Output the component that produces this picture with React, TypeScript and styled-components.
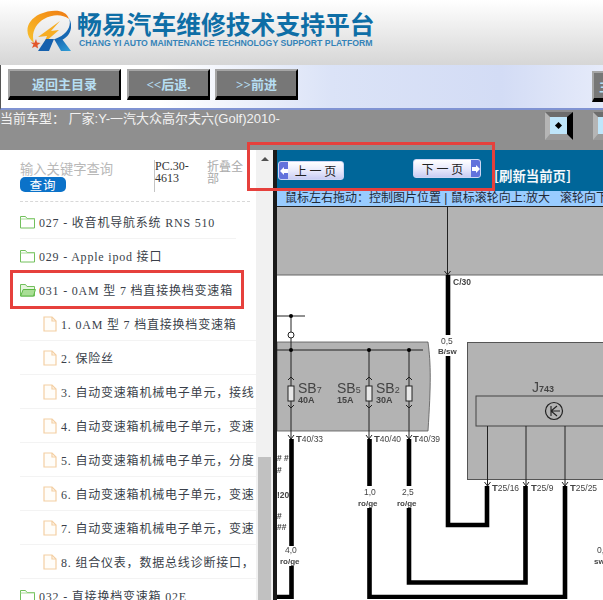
import React from "react";
import styled, { createGlobalStyle } from "styled-components";

const GlobalStyle = createGlobalStyle`
	html, body {
		margin: 0;
		padding: 0;
		background: #fff;
	}
`;

const SERIF = `"Liberation Serif", "Noto Sans CJK SC", serif`;
const SANS = `"Liberation Sans", "Noto Sans CJK SC", sans-serif`;

const Page = styled.div`
	position: relative;
	width: 603px;
	height: 600px;
	overflow: hidden;
	font-family: ${SANS};
`;

const Header = styled.header`
	height: 65px;
	box-sizing: border-box;
	display: flex;
	align-items: flex-start;
	gap: 6px;
	padding: 10px 0 0 25px;
	background: linear-gradient(#ffffff, #d6d6d6);
`;

const Brand = styled.div`
	display: flex;
	flex-direction: column;
	gap: 1px;
`;

const BrandTitle = styled.div`
	font-family: "Noto Sans CJK SC", sans-serif;
	font-size: 24.8px;
	line-height: 27px;
	font-weight: 700;
	white-space: nowrap;
	color: #0e6ea6;
`;

const BrandSub = styled.div`
	font-size: 8.7px;
	line-height: 11px;
	font-weight: 700;
	white-space: nowrap;
	padding-left: 2px;
	color: #3583b8;
`;

const NavBar = styled.nav`
	height: 45px;
	box-sizing: border-box;
	display: flex;
	gap: 5px;
	padding: 4px 0 0 7px;
	border-left: 1px solid #555;
	border-bottom: 2px solid #8093d2;
	background: linear-gradient(90deg, #ffffff 0, #ffffff 160px, #dbe3f7 330px, #d3dcf5 500px, #e6ebfa 603px);
`;

const NavButton = styled.button<{ $w: number; $ml?: number; $mt?: number }>`
	width: ${(p) => p.$w}px;
	margin: ${(p) => p.$mt || 0}px 0 0 ${(p) => p.$ml || 0}px;
	height: 31px;
	flex: none;
	box-sizing: border-box;
	padding: 0;
	background: #777777;
	border-style: solid;
	border-width: 2px 2px 4px 2px;
	border-color: #a5a5a5 #000 #000 #a5a5a5;
	color: #b6def2;
	font-family: ${SERIF};
	font-size: 13px;
	font-weight: 700;
	white-space: nowrap;
	overflow: hidden;
`;

const ModelBar = styled.div`
	height: 40px;
	display: flex;
	align-items: flex-start;
	background: #8f8f8f;
`;

const ModelText = styled.div`
	width: 545px;
	flex: none;
	font-size: 13px;
	line-height: 17px;
	color: #f2f2f2;
	white-space: nowrap;
`;

const ToolButton = styled.div<{ $ml?: number }>`
	width: 28px;
	height: 28px;
	flex: none;
	margin: 2px 0 0 ${(p) => p.$ml || 0}px;
	box-sizing: border-box;
	display: flex;
	align-items: center;
	justify-content: center;
	background: #bfe6fb;
	border-style: solid;
	border-width: 5px 6px 6px 5px;
	border-color: #6d6d6d #000 #9a9a9a #b5b5b5;
`;

const Diamond = styled.span`
	width: 5px;
	height: 5px;
	background: #000;
	transform: rotate(45deg);
`;

const Main = styled.main`
	display: flex;
	height: 450px;
`;

const Sidebar = styled.aside`
	width: 256px;
	flex: none;
	overflow: hidden;
	background: #fff;
`;

const SearchRow = styled.div`
	height: 52px;
	box-sizing: border-box;
	display: flex;
	margin: 0 6px 0 20px;
	padding-top: 10px;
	border-bottom: 1px dashed #d8d8d8;
`;

const SearchBox = styled.div`
	width: 134px;
	flex: none;
`;

const Placeholder = styled.div`
	font-family: "Noto Sans CJK SC", sans-serif;
	font-size: 13.3px;
	line-height: 17px;
	white-space: nowrap;
	color: #b8b8b8;
`;

const SearchButton = styled.div`
	width: 46px;
	height: 15px;
	border-radius: 5px;
	background: #0b72c9;
	color: #fff;
	font-family: "Noto Sans CJK SC", sans-serif;
	font-size: 12.5px;
	line-height: 15px;
	text-align: center;
	letter-spacing: 1px;
`;

const PartNo = styled.div`
	width: 53px;
	height: 32px;
	flex: none;
	box-sizing: border-box;
	border-left: 1px solid #c4c4c4;
	font-family: ${SERIF};
	font-size: 12px;
	line-height: 12px;
	color: #333;
`;

const Collapse = styled.div`
	width: 40px;
	flex: none;
	font-family: "Noto Sans CJK SC", sans-serif;
	font-size: 12px;
	line-height: 12px;
	color: #aaa;
`;

const Row = styled.div<{ $file?: boolean }>`
	height: 33px;
	width: 216px;
	margin-left: 20px;
	padding-left: ${(p) => (p.$file ? 23 : 0)}px;
	box-sizing: content-box;
	display: flex;
	align-items: center;
	gap: ${(p) => (p.$file ? 4 : 3)}px;
	border-bottom: 1px solid #f3f3f3;
	white-space: nowrap;
	font-family: ${SERIF};
	font-size: 12px;
	letter-spacing: 0.8px;
	color: #3a3f4a;
`;

const RowList = styled.div`
	padding-top: 3px;
`;

const Scrollbar = styled.div`
	width: 17px;
	flex: none;
	display: flex;
	flex-direction: column;
	align-items: center;
	background: #f1f1f1;
`;

const ScrollArrow = styled.div`
	margin-top: 7px;
	width: 0;
	height: 0;
	border-left: 4px solid transparent;
	border-right: 4px solid transparent;
	border-bottom: 4px solid #505050;
`;

const ScrollThumb = styled.div`
	margin-top: auto;
	width: 13px;
	height: 143px;
	background: #c1c1c1;
`;

const Viewer = styled.section`
	flex: 1;
	min-width: 0;
	display: flex;
	flex-direction: column;
	border-left: 4px solid #1a1a1a;
`;

const PageBand = styled.div`
	height: 41px;
	flex: none;
	background: #006699;
	display: flex;
	padding-left: 1px;
`;

const PageButton = styled.div<{ $mt: number; $w: number; $ml?: number }>`
	width: ${(p) => p.$w}px;
	height: 19px;
	margin: ${(p) => p.$mt}px 0 0 ${(p) => p.$ml || 0}px;
	box-sizing: border-box;
	flex: none;
	display: flex;
	align-items: center;
	border: 1px solid #cdd6f5;
	border-radius: 3px;
	background: linear-gradient(#ffffff, #e6e8fb 55%, #c9cdf3);
	color: #222;
	font-family: "Noto Sans CJK SC", sans-serif;
	font-size: 12px;
	overflow: hidden;
`;

const PageLabel = styled.span`
	flex: 1;
	text-align: center;
	white-space: nowrap;
`;

const PageArrow = styled.span`
	width: 9px;
	align-self: stretch;
	flex: none;
	display: flex;
	align-items: center;
	justify-content: center;
	background: #6272dc;
`;

const Refresh = styled.div`
	margin: 16px 0 0 13px;
	font-family: "Noto Sans CJK SC", sans-serif;
	font-size: 13.4px;
	line-height: 18px;
	font-weight: 700;
	color: #f4f8fb;
	white-space: nowrap;
`;

const HintBar = styled.div`
	height: 16px;
	flex: none;
	box-sizing: border-box;
	padding-left: 8px;
	background: #99ccff;
	border-bottom: 1px solid #222;
	color: #1f2a38;
	font-size: 12px;
	line-height: 15px;
	white-space: pre;
	overflow: hidden;
`;

const Diagram = styled.svg`
	display: block;
	flex: none;
	background: #fff;
	filter: blur(0.35px);
`;

const RedFrame = styled.div<{ $x: number; $y: number; $w: number; $h: number }>`
	position: absolute;
	left: ${(p) => p.$x}px;
	top: ${(p) => p.$y}px;
	width: ${(p) => p.$w}px;
	height: ${(p) => p.$h}px;
	box-sizing: border-box;
	border: 3px solid #e6403c;
	pointer-events: none;
`;

const Logo = () => (
	<svg width="46" height="42" viewBox="0 0 46 42">
		<defs>
			<linearGradient id="ring" x1="0" y1="1" x2="1" y2="0">
				<stop offset="0" stopColor="#f7c22f" />
				<stop offset="0.6" stopColor="#f59a1b" />
				<stop offset="1" stopColor="#ee7a16" />
			</linearGradient>
			<linearGradient id="leg" x1="0" y1="0" x2="1" y2="1">
				<stop offset="0" stopColor="#1560ad" />
				<stop offset="1" stopColor="#2f9fd8" />
			</linearGradient>
		</defs>
		<path d="M9 33C-1 25 0 11 15 4 27-1 41-1 44 9 37 4 28 4 19 9 10 14 6 24 9 33z" fill="url(#ring)" />
		<path d="M44 8C47 16 42 25 30 29l4 2C45 28 49 17 44 8z" fill="#1668b3" />
		<path d="M35 11 13 27l9-1-3 7 15-13-8 1z" fill="#f6ad24" />
		<path d="M7 38l1.500-3.500-3-2 4 .2L11 29l1 3.500 3.500.5-3 2 .5 3.500-3-2z" fill="#e2562a" />
		<path d="M13 41l8-12h8l-5 12z" fill="#1560ad" />
		<path d="M29 29h8l9 12H36z" fill="url(#leg)" />
	</svg>
);

const Folder = ({ open }: { open?: boolean }) => (
	<svg width="16" height="14" viewBox="0 0 16 14">
		<path d="M.5 13V1.500h5l1.500 2h7.500V13z" fill={open ? "#e6f6de" : "#fff"} stroke="#72c05c" />
		{open && <path d="M.6 13 3.200 6.500h12.200L13.500 13z" fill="#a9de95" stroke="#5cb846" />}
		{!open && <path d="M.5 4h14" stroke="#a9dc98" />}
	</svg>
);

const FileIcon = () => (
	<svg width="14" height="16" viewBox="0 0 14 16">
		<path d="M1 1h8l4 4v10H1z" fill="#fffdf9" stroke="#f4cfa3" strokeWidth="1.2" />
		<path d="M9 1v4h4" fill="none" stroke="#f4cfa3" strokeWidth="1.2" />
	</svg>
);

const ArrowGlyph = ({ left }: { left?: boolean }) => (
	<svg width="8" height="10" viewBox="0 0 8 10">
		<path d={left ? "M0 5 4 1v2h4v4H4v2z" : "M8 5 4 1v2H0v4h4v2z"} fill="#fff" />
	</svg>
);

const folders = [
	{ text: "027 - 收音机导航系统 RNS 510" },
	{ text: "029 - Apple ipod 接口" },
	{ text: "031 - 0AM 型 7 档直接换档变速箱", open: true },
];

const files = [
	"1. 0AM 型 7 档直接换档变速箱",
	"2. 保险丝",
	"3. 自动变速箱机械电子单元，接线",
	"4. 自动变速箱机械电子单元，变速",
	"5. 自动变速箱机械电子单元，分度",
	"6. 自动变速箱机械电子单元，变速",
	"7. 自动变速箱机械电子单元，变速",
	"8. 组合仪表，数据总线诊断接口，",
];

// thick wires of the circuit, page coordinates
const wires = [
	"M448 276V336",
	"M448 357V526H487V487",
	"M525.500 487V583.500H409V509",
	"M409 440V487",
	"M565 487V598H369.500V509",
	"M369.500 440V487",
	"M291.500 440V547",
	"M291.500 567V598H277",
];

const thin = [
	"M447.500 208V276",
	"M277 317H305",
	"M291 317V333",
	"M291 339V440",
	"M277 351H423",
	"M369 351V440",
	"M409 351V440",
	"M487.500 427V487",
	"M526 427V487",
	"M565 427V487",
];

const arrowsDown = [[447.5, 276], [291, 440], [369, 440], [409, 440], [487.5, 487], [526, 487], [565, 487]];
const dots = [[291, 317], [291, 351], [369, 351], [409, 351]];
const fuses = [291, 369, 409];

const Label = styled.text<{ $bold?: boolean }>`
	font-family: "Liberation Sans", sans-serif;
	font-weight: ${(p) => (p.$bold ? 700 : 400)};
	fill: #444;
`;

const Circuit = () => (
	<Diagram width="326" height="392" viewBox="277 208 326 392">
		<rect x="277" y="208" width="326" height="68" fill="#b3b3b3" />
		<path d="M277 276H603" stroke="#666" strokeWidth="1" />
		<path d="M277 343H428C431 365 431 385 428 432H277z" fill="#b3b3b3" stroke="#555" strokeWidth="0.8" />
		<rect x="467.500" y="343.500" width="140" height="137" fill="#b3b3b3" stroke="#555" />
		<rect x="476" y="397" width="140" height="30" fill="#b3b3b3" stroke="#444" />
		{wires.map((d) => (
			<path key={d} d={d} fill="none" stroke="#000" strokeWidth="4.6" />
		))}
		{thin.map((d) => (
			<path key={d} d={d} fill="none" stroke="#222" strokeWidth="1" />
		))}
		{arrowsDown.map(([x, y]) => (
			<path key={x} d={`M${x - 3} ${y - 4}L${x} ${y}L${x + 3} ${y - 4}`} fill="none" stroke="#222" strokeWidth="1" />
		))}
		{dots.map(([x, y]) => (
			<circle key={`${x}-${y}`} cx={x} cy={y} r="2" fill="#000" />
		))}
		<circle cx="291" cy="336" r="3" fill="#fff" stroke="#222" />
		{fuses.map((x) => (
			<g key={x}>
				<path d={`M${x - 3} 381L${x} 378L${x + 3} 381M${x - 3} 406L${x} 409L${x + 3} 406`} fill="none" stroke="#222" />
				<rect x={x - 3} y="387" width="6" height="15" fill="#e8e8e8" stroke="#222" />
			</g>
		))}
		<Label x="298" y="394" fontSize="14">SB<tspan fontSize="9">7</tspan></Label>
		<Label x="337" y="394" fontSize="14">SB<tspan fontSize="9">5</tspan></Label>
		<Label x="376" y="394" fontSize="14">SB<tspan fontSize="9">2</tspan></Label>
		<Label x="298" y="404" fontSize="9" $bold>40A</Label>
		<Label x="337" y="404" fontSize="9" $bold>15A</Label>
		<Label x="376" y="404" fontSize="9" $bold>30A</Label>
		<Label x="453" y="286" fontSize="8.5" $bold>C/30</Label>
		<Label x="441" y="345" fontSize="8.5">0,5</Label>
		<Label x="438" y="355" fontSize="8" $bold>B/sw</Label>
		<Label x="532" y="393" fontSize="14">J<tspan fontSize="9" fontWeight="700">743</tspan></Label>
		<circle cx="554" cy="412" r="8.500" fill="none" stroke="#222" strokeWidth="1.2" />
		<path d="M560 412H551M551 407V417M557 407L551 412L557 417" fill="none" stroke="#222" strokeWidth="1.1" />
		{[
			[296, 443, "40/33"],
			[374, 443, "40/40"],
			[413, 443, "40/39"],
			[492, 492, "25/16"],
			[531, 492, "25/9"],
			[570, 492, "25/25"],
		].map(([x, y, t]) => (
			<Label key={String(t)} x={x as number} y={y as number} fontSize="8.5">
				<tspan fontWeight="700" fontSize="9.5">T</tspan>
				{t}
			</Label>
		))}
		<Label x="364" y="496" fontSize="8.5">1,0</Label>
		<Label x="358" y="507" fontSize="8" $bold>ro/ge</Label>
		<Label x="402" y="496" fontSize="8.5">2,5</Label>
		<Label x="397" y="507" fontSize="8" $bold>ro/ge</Label>
		<Label x="285" y="554" fontSize="8.5">4,0</Label>
		<Label x="280" y="565" fontSize="8" $bold>ro/ge</Label>
		<Label x="597" y="554" fontSize="8.5">0,5</Label>
		<Label x="594" y="565" fontSize="8" $bold>sw</Label>
		<Label x="277" y="462" fontSize="8.5" $bold># #</Label>
		<Label x="277" y="474" fontSize="8.5" $bold>#</Label>
		<Label x="277" y="499" fontSize="8.5" $bold>!20</Label>
		<Label x="277" y="520" fontSize="8.5" $bold>#</Label>
		<Label x="277" y="531" fontSize="8.5" $bold>##</Label>
	</Diagram>
);

const App = () => (
	<Page>
		<GlobalStyle />
		<Header>
			<Logo />
			<Brand>
				<BrandTitle>畅易汽车维修技术支持平台</BrandTitle>
				<BrandSub>CHANG YI AUTO MAINTENANCE TECHNOLOGY SUPPORT PLATFORM</BrandSub>
			</Brand>
		</Header>
		<NavBar>
			<NavButton $w={113}>返回主目录</NavButton>
			<NavButton $w={83} $ml={1}>&lt;&lt;后退.</NavButton>
			<NavButton $w={83}>&gt;&gt;前进</NavButton>
			<NavButton $w={40} $ml={289} $mt={2}>主页</NavButton>
		</NavBar>
		<ModelBar>
			<ModelText>当前车型： 厂家:Y-一汽大众高尔夫六(Golf)2010-</ModelText>
			<ToolButton><Diamond /></ToolButton>
			<ToolButton $ml={20}><Diamond /></ToolButton>
		</ModelBar>
		<Main>
			<Sidebar>
				<SearchRow>
					<SearchBox>
						<Placeholder>输入关键字查询</Placeholder>
						<SearchButton>查询</SearchButton>
					</SearchBox>
					<PartNo>PC.30-4613</PartNo>
					<Collapse>折叠全部</Collapse>
				</SearchRow>
				<RowList>
					{folders.map((f) => (
						<Row key={f.text}>
							<Folder open={f.open} />
							{f.text}
						</Row>
					))}
					{files.map((t) => (
						<Row key={t} $file>
							<FileIcon />
							{t}
						</Row>
					))}
					<Row>
						<Folder />
						032 - 直接换档变速箱 02E
					</Row>
				</RowList>
			</Sidebar>
			<Scrollbar>
				<ScrollArrow />
				<ScrollThumb />
			</Scrollbar>
			<Viewer>
				<PageBand>
					<PageButton $mt={11} $w={66}>
						<PageArrow><ArrowGlyph left /></PageArrow>
						<PageLabel>上 一 页</PageLabel>
					</PageButton>
					<PageButton $mt={9} $w={68} $ml={69}>
						<PageLabel>下 一 页</PageLabel>
						<PageArrow><ArrowGlyph /></PageArrow>
					</PageButton>
					<Refresh>[刷新当前页]</Refresh>
				</PageBand>
				<HintBar>{"鼠标左右拖动：控制图片位置 | 鼠标滚轮向上:放大   滚轮向下:缩小"}</HintBar>
				<Circuit />
			</Viewer>
		</Main>
		<RedFrame $x={247} $y={142} $w={248} $h={49} />
		<RedFrame $x={10} $y={270} $w={234} $h={39} />
	</Page>
);

export default App;
